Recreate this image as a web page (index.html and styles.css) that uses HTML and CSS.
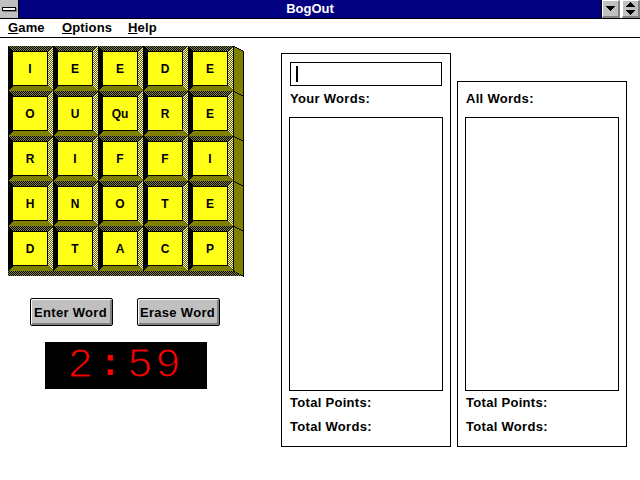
FILE: index.html
```html
<!DOCTYPE html>
<html lang="en">
<head>
<meta charset="utf-8">
<title>BogOut</title>
<link rel="stylesheet" href="styles.css">
</head>
<body>
<div class="app">
  <header class="titlebar">
    <div class="sysbox"><span class="sysbar"></span></div>
    <div class="title">BogOut</div>
    <div class="winbtn">
      <svg width="9" height="5" viewBox="0 0 9 5" shape-rendering="crispEdges"><path d="M0 0h9v1h-1v1h-1v1h-1v1h-1v1h-1v-1h-1v-1h-1v-1h-1z"/></svg>
    </div>
    <div class="winbtn winbtn-last">
      <svg width="9" height="13" viewBox="0 0 9 13" shape-rendering="crispEdges"><path d="M4 0h1v1h1v1h1v1h1v1h1v1h-9v-1h1v-1h1v-1h1v-1h1zM0 8h9v1h-1v1h-1v1h-1v1h-1v1h-1v-1h-1v-1h-1v-1h-1v-1h-1z"/></svg>
    </div>
  </header>
  <nav class="menubar">
    <span class="menu menu-game"><u>G</u>ame</span>
    <span class="menu menu-options"><u>O</u>ptions</span>
    <span class="menu"><u>H</u>elp</span>
  </nav>
  <main class="main">
    <section class="game">
      <div class="board">
        <svg class="board-art" width="236" height="231" viewBox="0 0 236 231" shape-rendering="crispEdges">
          <defs>
            <pattern id="pYellow" width="2" height="2" patternUnits="userSpaceOnUse"><rect width="2" height="2" fill="#ffff00"/><rect width="1" height="1" fill="#ffff30"/><rect x="1" y="1" width="1" height="1" fill="#ffff30"/></pattern>
            <pattern id="pTop" width="2" height="2" patternUnits="userSpaceOnUse"><rect width="2" height="2" fill="#808040"/><rect width="1" height="1" fill="#000"/><rect x="1" y="1" width="1" height="1" fill="#000"/></pattern>
            <pattern id="pRight" width="2" height="2" patternUnits="userSpaceOnUse"><rect width="2" height="2" fill="#606020"/><rect width="1" height="1" fill="#ffffb0"/><rect x="1" y="1" width="1" height="1" fill="#ffffb0"/></pattern>
          </defs>
          <polygon points="225,0 235,5 235,230 225,225" fill="#808000" stroke="#000"/>
          <path d="M225 45l10 5M225 90l10 5M225 135l10 5M225 180l10 5" stroke="#000" fill="none"/>
          <polygon points="0,225 225,225 235,230 0,230" fill="url(#pTop)"/>
          <!-- black: left bevels and the well behind each face -->
          <path fill="#000" d="M0 0h40v40h-35l-5 5z m45 0h40v40h-35l-5 5z m45 0h40v40h-35l-5 5z m45 0h40v40h-35l-5 5z m45 0h40v40h-35l-5 5z
            M0 45h40v40h-35l-5 5z m45 0h40v40h-35l-5 5z m45 0h40v40h-35l-5 5z m45 0h40v40h-35l-5 5z m45 0h40v40h-35l-5 5z
            M0 90h40v40h-35l-5 5z m45 0h40v40h-35l-5 5z m45 0h40v40h-35l-5 5z m45 0h40v40h-35l-5 5z m45 0h40v40h-35l-5 5z
            M0 135h40v40h-35l-5 5z m45 0h40v40h-35l-5 5z m45 0h40v40h-35l-5 5z m45 0h40v40h-35l-5 5z m45 0h40v40h-35l-5 5z
            M0 180h40v40h-35l-5 5z m45 0h40v40h-35l-5 5z m45 0h40v40h-35l-5 5z m45 0h40v40h-35l-5 5z m45 0h40v40h-35l-5 5z"/>
          <!-- top bevels -->
          <path fill="url(#pTop)" d="M0 0h45l-5 5h-35z m45 0h45l-5 5h-35z m45 0h45l-5 5h-35z m45 0h45l-5 5h-35z m45 0h45l-5 5h-35z
            M0 45h45l-5 5h-35z m45 0h45l-5 5h-35z m45 0h45l-5 5h-35z m45 0h45l-5 5h-35z m45 0h45l-5 5h-35z
            M0 90h45l-5 5h-35z m45 0h45l-5 5h-35z m45 0h45l-5 5h-35z m45 0h45l-5 5h-35z m45 0h45l-5 5h-35z
            M0 135h45l-5 5h-35z m45 0h45l-5 5h-35z m45 0h45l-5 5h-35z m45 0h45l-5 5h-35z m45 0h45l-5 5h-35z
            M0 180h45l-5 5h-35z m45 0h45l-5 5h-35z m45 0h45l-5 5h-35z m45 0h45l-5 5h-35z m45 0h45l-5 5h-35z"/>
          <!-- right bevels -->
          <path fill="url(#pRight)" d="M45 0v45l-5-5v-35z m45 0v45l-5-5v-35z m45 0v45l-5-5v-35z m45 0v45l-5-5v-35z m45 0v45l-5-5v-35z
            M45 45v45l-5-5v-35z m45 0v45l-5-5v-35z m45 0v45l-5-5v-35z m45 0v45l-5-5v-35z m45 0v45l-5-5v-35z
            M45 90v45l-5-5v-35z m45 0v45l-5-5v-35z m45 0v45l-5-5v-35z m45 0v45l-5-5v-35z m45 0v45l-5-5v-35z
            M45 135v45l-5-5v-35z m45 0v45l-5-5v-35z m45 0v45l-5-5v-35z m45 0v45l-5-5v-35z m45 0v45l-5-5v-35z
            M45 180v45l-5-5v-35z m45 0v45l-5-5v-35z m45 0v45l-5-5v-35z m45 0v45l-5-5v-35z m45 0v45l-5-5v-35z"/>
          <!-- bottom bevels -->
          <path fill="#808000" d="M5 40h35l5 5h-45z m45 0h35l5 5h-45z m45 0h35l5 5h-45z m45 0h35l5 5h-45z m45 0h35l5 5h-45z
            M5 85h35l5 5h-45z m45 0h35l5 5h-45z m45 0h35l5 5h-45z m45 0h35l5 5h-45z m45 0h35l5 5h-45z
            M5 130h35l5 5h-45z m45 0h35l5 5h-45z m45 0h35l5 5h-45z m45 0h35l5 5h-45z m45 0h35l5 5h-45z
            M5 175h35l5 5h-45z m45 0h35l5 5h-45z m45 0h35l5 5h-45z m45 0h35l5 5h-45z m45 0h35l5 5h-45z
            M5 220h35l5 5h-45z m45 0h35l5 5h-45z m45 0h35l5 5h-45z m45 0h35l5 5h-45z m45 0h35l5 5h-45z"/>
          <!-- faces -->
          <path fill="url(#pYellow)" d="M5 6h34v33h-34z m45 0h34v33h-34z m45 0h34v33h-34z m45 0h34v33h-34z m45 0h34v33h-34z
            M5 51h34v33h-34z m45 0h34v33h-34z m45 0h34v33h-34z m45 0h34v33h-34z m45 0h34v33h-34z
            M5 96h34v33h-34z m45 0h34v33h-34z m45 0h34v33h-34z m45 0h34v33h-34z m45 0h34v33h-34z
            M5 141h34v33h-34z m45 0h34v33h-34z m45 0h34v33h-34z m45 0h34v33h-34z m45 0h34v33h-34z
            M5 186h34v33h-34z m45 0h34v33h-34z m45 0h34v33h-34z m45 0h34v33h-34z m45 0h34v33h-34z"/>
        </svg>
        <div class="letters">
          <span>I</span><span>E</span><span>E</span><span>D</span><span>E</span>
          <span>O</span><span>U</span><span>Qu</span><span>R</span><span>E</span>
          <span>R</span><span>I</span><span>F</span><span>F</span><span>I</span>
          <span>H</span><span>N</span><span>O</span><span>T</span><span>E</span>
          <span>D</span><span>T</span><span>A</span><span>C</span><span>P</span>
        </div>
      </div>
      <div class="actions">
        <button class="btn" type="button">Enter Word</button>
        <button class="btn" type="button">Erase Word</button>
      </div>
      <div class="timer"><span class="mins">2</span><b>:</b><span>59</span></div>
    </section>
    <section class="panel panel-you">
      <div class="entry"><span class="caret"></span></div>
      <div class="label label-words">Your Words:</div>
      <div class="list"></div>
      <div class="label label-points">Total Points:</div>
      <div class="label label-total">Total Words:</div>
    </section>
    <section class="panel panel-all">
      <div class="label label-all">All Words:</div>
      <div class="list"></div>
      <div class="label label-points">Total Points:</div>
      <div class="label label-total">Total Words:</div>
    </section>
  </main>
</div>
</body>
</html>
```

FILE: styles.css
```css
* { box-sizing: border-box; }
html, body { margin: 0; padding: 0; background: #fff; }
body { width: 640px; height: 480px; overflow: hidden; font-family: "Liberation Sans", Arial, sans-serif; font-weight: 700; font-size: 13px; color: #000; }
.app { display: flex; flex-direction: column; width: 640px; height: 480px; }

.titlebar { display: flex; height: 19px; border-bottom: 1px solid #000; background: #000080; }
.sysbox { width: 19px; height: 18px; background: #c0c0c0; border-right: 1px solid #000; padding: 7px 0 0 2px; }
.sysbar { display: block; width: 14px; height: 4px; background: #fff; border: 1px solid #000; box-shadow: 1px 1px 0 #808080; }
.title { flex: 1; text-align: center; color: #fff; line-height: 18px; }
.winbtn { width: 18px; height: 18px; margin-left: 1px; display: flex; align-items: center; justify-content: center; background: #c0c0c0; border-top: 1px solid #fff; border-left: 1px solid #fff; border-right: 2px solid #808080; border-bottom: 2px solid #808080; box-shadow: -1px 0 0 #000; }
.winbtn-last { margin-left: 2px; box-shadow: -2px 0 0 #fff; }

.menubar { display: flex; height: 19px; border-bottom: 1px solid #000; padding-left: 8px; line-height: 18px; letter-spacing: .15px; }
.menu-game { width: 54px; }
.menu-options { width: 66px; }

.main { display: flex; flex: 1; }
.game { width: 281px; padding: 8px 0 0 8px; }
.board { position: relative; width: 236px; height: 231px; }
.board-art { display: block; }
.letters { position: absolute; left: 0; top: 0; display: grid; grid-template-columns: repeat(5, 45px); grid-auto-rows: 45px; }
.letters span { display: flex; align-items: center; justify-content: center; padding: 0 1px 0 0; font-size: 12px; }

.actions { display: flex; gap: 24px; margin: 21px 0 0 22px; }
.btn { width: 83px; height: 28px; padding: 0 2px 0 0; font: inherit; letter-spacing: .3px; color: #000; background: #c0c0c0; border: 1px solid #000; border-radius: 2px; box-shadow: inset 1px 1px 0 #fff, inset -2px -2px 0 #808080; }

.timer { display: flex; justify-content: center; align-items: center; width: 162px; height: 47px; margin: 16px 0 0 37px; padding-right: 2px; background: #000; color: #f00; font-family: "Liberation Mono", monospace; font-weight: 400; font-size: 43px; line-height: 47px; }
.timer span { letter-spacing: 2px; -webkit-text-stroke: 1.2px #000; }
.timer .mins { letter-spacing: 0; }
.timer b { width: 34px; text-align: center; font-weight: 700; font-size: 36px; }

.panel { display: flex; flex-direction: column; width: 170px; height: 394px; border: 1px solid #000; }
.panel-you { margin-top: 15px; }
.panel-all { margin: 43px 0 0 6px; height: 366px; }
.entry { display: flex; align-items: center; width: 152px; height: 24px; margin: 8px 0 0 8px; padding-left: 5px; border: 1px solid #000; }
.caret { width: 2px; height: 16px; background: #000; }
.label { height: 16px; line-height: 16px; margin-left: 8px; letter-spacing: .3px; }
.label-words { margin-top: 5px; }
.label-all { margin-top: 9px; }
.list { width: 154px; height: 274px; margin: 10px 0 0 7px; border: 1px solid #000; }
.label-points { margin-top: 4px; }
.label-total { margin-top: 8px; }
```
